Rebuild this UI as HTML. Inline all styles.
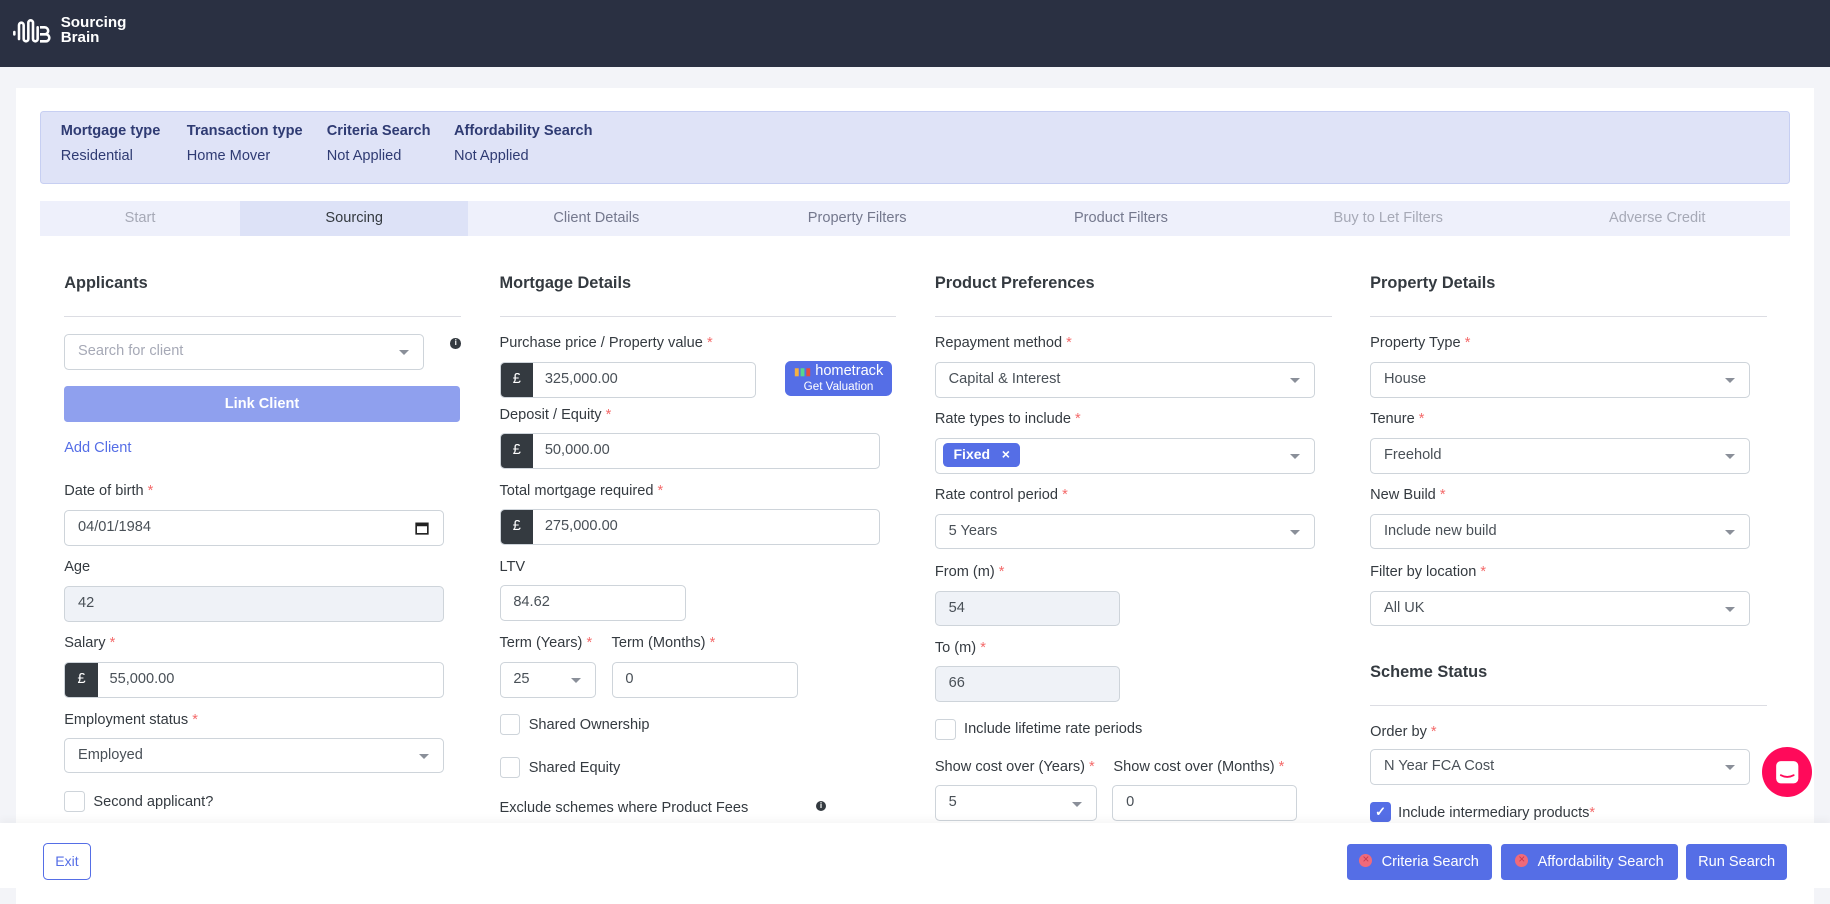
<!DOCTYPE html>
<html><head><meta charset="utf-8">
<style>
html,body{margin:0;padding:0;}
body{width:1568px;height:761px;overflow:hidden;zoom:1.16709;background:#f3f4f8;font-family:"Liberation Sans",sans-serif;color:#495057;font-size:12.5px;position:relative;}
.a{position:absolute;}
.hdr{left:0;top:0;width:1568px;height:57px;background:#2a3042;}
.card{left:14px;top:75px;width:1540px;height:700px;background:#fff;}
.info{left:34px;top:95px;width:1498px;height:61px;background:#dfe3f7;border:1px solid #c7cff2;border-radius:3px;}
.ih{font-weight:bold;color:#2f3b73;font-size:12.5px;}
.iv{color:#2f3b73;font-size:12.5px;}
.tabs{left:34px;top:172px;height:30px;width:1500px;display:flex;background:#eef0fb;}
.tabs div{text-align:center;line-height:30px;color:#74788d;font-size:12.5px;}
.h{font-weight:bold;color:#343a40;font-size:14px;}
.ln{height:1px;background:#dcdde3;width:340px;}
.l{color:#343a40;font-size:12.5px;white-space:nowrap;}
.l b{color:#f46a6a;font-weight:normal;}
.in{border:1px solid #ced4da;border-radius:4px;height:29px;background:#fff;box-sizing:content-box;line-height:29px;padding-left:11px;color:#495057;font-size:12.5px;}
.dis{background:#eff2f7;}
.sel::after{content:"";position:absolute;right:12px;top:13px;border-left:5px solid transparent;border-right:5px solid transparent;border-top:5px solid #8a8f99;}
.grp{display:flex;border:1px solid #ced4da;border-radius:4px;height:29px;overflow:hidden;}
.grp .p{width:28px;background:#343a40;color:#fff;text-align:center;line-height:29px;}
.grp .v{padding-left:10px;line-height:29px;}
.cb{width:16px;height:16px;border:1px solid #ced4da;border-radius:3px;background:#fff;}
.ic{width:9px;height:9px;border-radius:50%;background:#343a40;color:#fff;font-size:7px;line-height:9px;text-align:center;font-weight:bold;}
.foot{left:0;top:705px;width:1568px;height:56px;background:#fff;box-shadow:0 -4px 6px rgba(0,0,0,0.03);}
.btn{background:#556ee6;color:#fff;border-radius:3px;height:31px;line-height:31px;font-size:12.5px;text-align:center;}
.x{display:inline-block;width:11px;height:11px;border-radius:50%;background:#f06a7a;vertical-align:-1px;margin-right:8px;position:relative;}
.x::after{content:"×";position:absolute;left:0;top:0;width:11px;line-height:11px;font-size:10px;color:#c8394e;text-align:center;}
</style></head><body>
<div class="a hdr"></div>
<svg class="a" style="left:10px;top:15px" width="36" height="24" viewBox="0 0 36 24"><path d="M2 12v2M6 6v12M6 6a2 2 0 0 1 4 0v12a2 2 0 0 0 4 0V4a2 2 0 0 1 4 0v14a2 2 0 0 0 4 0V8" stroke="#fff" stroke-width="2.2" fill="none" stroke-linecap="round"/><path d="M24 8h4a3 3 0 0 1 0 6h-4M26 14h3a3 3 0 0 1 0 6h-5" stroke="#fff" stroke-width="2.2" fill="none"/></svg>
<div class="a" style="left:52px;top:13px;color:#fff;font-size:13px;line-height:13px;font-weight:bold">Sourcing<br>Brain</div>

<div class="a card"></div>
<div class="a info"></div>
<div class="a ih" style="left:52px;top:105px">Mortgage type</div>
<div class="a iv" style="left:52px;top:127px">Residential</div>
<div class="a ih" style="left:160px;top:105px">Transaction type</div>
<div class="a iv" style="left:160px;top:127px">Home Mover</div>
<div class="a ih" style="left:280px;top:105px">Criteria Search</div>
<div class="a iv" style="left:280px;top:127px">Not Applied</div>
<div class="a ih" style="left:389px;top:105px">Affordability Search</div>
<div class="a iv" style="left:389px;top:127px">Not Applied</div>

<div class="a tabs">
<div style="width:172px;color:#a6a9b6">Start</div>
<div style="width:195px;background:#dde2f7;color:#343a40">Sourcing</div>
<div style="width:220px">Client Details</div>
<div style="width:227px">Property Filters</div>
<div style="width:225px">Product Filters</div>
<div style="width:233px;color:#a6a9b6">Buy to Let Filters</div>
<div style="width:228px;color:#a6a9b6">Adverse Credit</div>
</div>

<!-- col1 -->
<div class="a h" style="left:55px;top:235px">Applicants</div>
<div class="a ln" style="left:55px;top:271px"></div>
<div class="a in sel" style="left:55px;top:286px;width:296px;color:#a6a9b6">Search for client</div>
<div class="a ic" style="left:386px;top:290px">i</div>
<div class="a btn" style="left:55px;top:331px;width:339px;background:#8fa0ee;font-weight:bold">Link Client</div>
<div class="a" style="left:55px;top:377px;color:#556ee6">Add Client</div>
<div class="a l" style="left:55px;top:414px">Date of birth <b>*</b></div>
<div class="a in" style="left:55px;top:437px;width:313px">04/01/1984</div>
<svg class="a" style="left:356px;top:446px" width="12" height="12" viewBox="0 0 12 12"><rect x="1" y="2" width="10" height="9" fill="none" stroke="#222" stroke-width="1.4"/><rect x="1" y="2" width="10" height="2.5" fill="#222"/></svg>
<div class="a l" style="left:55px;top:479px">Age</div>
<div class="a in dis" style="left:55px;top:502px;width:313px">42</div>
<div class="a l" style="left:55px;top:544px">Salary <b>*</b></div>
<div class="a grp" style="left:55px;top:567px;width:324px"><div class="p">£</div><div class="v">55,000.00</div></div>
<div class="a l" style="left:55px;top:610px">Employment status <b>*</b></div>
<div class="a in sel" style="left:55px;top:632px;width:313px">Employed</div>
<div class="a cb" style="left:55px;top:678px"></div>
<div class="a l" style="left:80px;top:680px">Second applicant?</div>

<!-- col2 -->
<div class="a h" style="left:428px;top:235px">Mortgage Details</div>
<div class="a ln" style="left:428px;top:271px"></div>
<div class="a l" style="left:428px;top:287px">Purchase price / Property value <b>*</b></div>
<div class="a grp" style="left:428px;top:310px;width:218px"><div class="p">£</div><div class="v">325,000.00</div></div>
<div class="a btn" style="left:673px;top:309px;width:91px;height:30px;line-height:12px;border-radius:5px;font-size:10px">
<div style="padding-top:3px;font-size:12.5px"><span style="color:#f5b041;font-size:9px">▮</span><span style="color:#58d68d;font-size:9px">▮</span><span style="color:#e74c3c;font-size:9px">▮</span> hometrack</div><div style="padding-top:1px">Get Valuation</div></div>
<div class="a l" style="left:428px;top:349px">Deposit / Equity <b>*</b></div>
<div class="a grp" style="left:428px;top:371px;width:324px"><div class="p">£</div><div class="v">50,000.00</div></div>
<div class="a l" style="left:428px;top:414px">Total mortgage required <b>*</b></div>
<div class="a grp" style="left:428px;top:436px;width:324px"><div class="p">£</div><div class="v">275,000.00</div></div>
<div class="a l" style="left:428px;top:479px">LTV</div>
<div class="a in" style="left:428px;top:501px;width:147px">84.62</div>
<div class="a l" style="left:428px;top:544px">Term (Years) <b>*</b></div>
<div class="a l" style="left:524px;top:544px">Term (Months) <b>*</b></div>
<div class="a in sel" style="left:428px;top:567px;width:70px">25</div>
<div class="a in" style="left:524px;top:567px;width:147px">0</div>
<div class="a cb" style="left:428px;top:612px"></div>
<div class="a l" style="left:453px;top:614px">Shared Ownership</div>
<div class="a cb" style="left:428px;top:649px"></div>
<div class="a l" style="left:453px;top:651px">Shared Equity</div>
<div class="a l" style="left:428px;top:683px;line-height:20px">Exclude schemes where Product Fees<br>cannot be added?</div>
<div class="a ic" style="left:699px;top:686px">i</div>

<!-- col3 -->
<div class="a h" style="left:801px;top:235px">Product Preferences</div>
<div class="a ln" style="left:801px;top:271px"></div>
<div class="a l" style="left:801px;top:287px">Repayment method <b>*</b></div>
<div class="a in sel" style="left:801px;top:310px;width:313px">Capital &amp; Interest</div>
<div class="a l" style="left:801px;top:352px">Rate types to include <b>*</b></div>
<div class="a in sel" style="left:801px;top:375px;width:313px"></div>
<div class="a" style="left:808px;top:380px;height:20px;line-height:20px;background:#556ee6;color:#fff;border-radius:4px;padding:0 9px;font-weight:bold;font-size:12px">Fixed &nbsp; ×</div>
<div class="a l" style="left:801px;top:417px">Rate control period <b>*</b></div>
<div class="a in sel" style="left:801px;top:440px;width:313px">5 Years</div>
<div class="a l" style="left:801px;top:483px">From (m) <b>*</b></div>
<div class="a in dis" style="left:801px;top:506px;width:146px">54</div>
<div class="a l" style="left:801px;top:548px">To (m) <b>*</b></div>
<div class="a in dis" style="left:801px;top:571px;width:146px">66</div>
<div class="a cb" style="left:801px;top:616px"></div>
<div class="a l" style="left:826px;top:618px">Include lifetime rate periods</div>
<div class="a l" style="left:801px;top:650px">Show cost over (Years) <b>*</b></div>
<div class="a l" style="left:954px;top:650px">Show cost over (Months) <b>*</b></div>
<div class="a in sel" style="left:801px;top:673px;width:126px">5</div>
<div class="a in" style="left:953px;top:673px;width:146px">0</div>

<!-- col4 -->
<div class="a h" style="left:1174px;top:235px">Property Details</div>
<div class="a ln" style="left:1174px;top:271px"></div>
<div class="a l" style="left:1174px;top:287px">Property Type <b>*</b></div>
<div class="a in sel" style="left:1174px;top:310px;width:313px">House</div>
<div class="a l" style="left:1174px;top:352px">Tenure <b>*</b></div>
<div class="a in sel" style="left:1174px;top:375px;width:313px">Freehold</div>
<div class="a l" style="left:1174px;top:417px">New Build <b>*</b></div>
<div class="a in sel" style="left:1174px;top:440px;width:313px">Include new build</div>
<div class="a l" style="left:1174px;top:483px">Filter by location <b>*</b></div>
<div class="a in sel" style="left:1174px;top:506px;width:313px">All UK</div>
<div class="a h" style="left:1174px;top:568px">Scheme Status</div>
<div class="a ln" style="left:1174px;top:604px"></div>
<div class="a l" style="left:1174px;top:620px">Order by <b>*</b></div>
<div class="a in sel" style="left:1174px;top:642px;width:313px">N Year FCA Cost</div>
<div class="a cb" style="left:1174px;top:687px;background:#556ee6;border-color:#556ee6;color:#fff;font-size:11px;text-align:center;line-height:16px;font-weight:bold">✓</div>
<div class="a l" style="left:1198px;top:690px">Include intermediary products<b>*</b></div>

<div class="a" style="left:1510px;top:640px;width:43px;height:43px;border-radius:50%;background:#ff0a5a"></div>
<svg class="a" style="left:1521px;top:651px" width="21" height="21" viewBox="0 0 21 21"><rect x="1" y="1" width="19" height="19" rx="4" fill="#fff"/><path d="M5 13q5.5 3 11 0" stroke="#ff0a5a" stroke-width="1.6" fill="none" stroke-linecap="round"/></svg>

<div class="a foot"></div>
<div class="a" style="left:37px;top:722px;width:39px;height:30px;border:1px solid #556ee6;border-radius:4px;color:#556ee6;text-align:center;line-height:30px;font-size:12px">Exit</div>
<div class="a btn" style="left:1154px;top:723px;width:124px"><span class="x"></span>Criteria Search</div>
<div class="a btn" style="left:1286px;top:723px;width:152px"><span class="x"></span>Affordability Search</div>
<div class="a btn" style="left:1445px;top:723px;width:86px">Run Search</div>
</body></html>
